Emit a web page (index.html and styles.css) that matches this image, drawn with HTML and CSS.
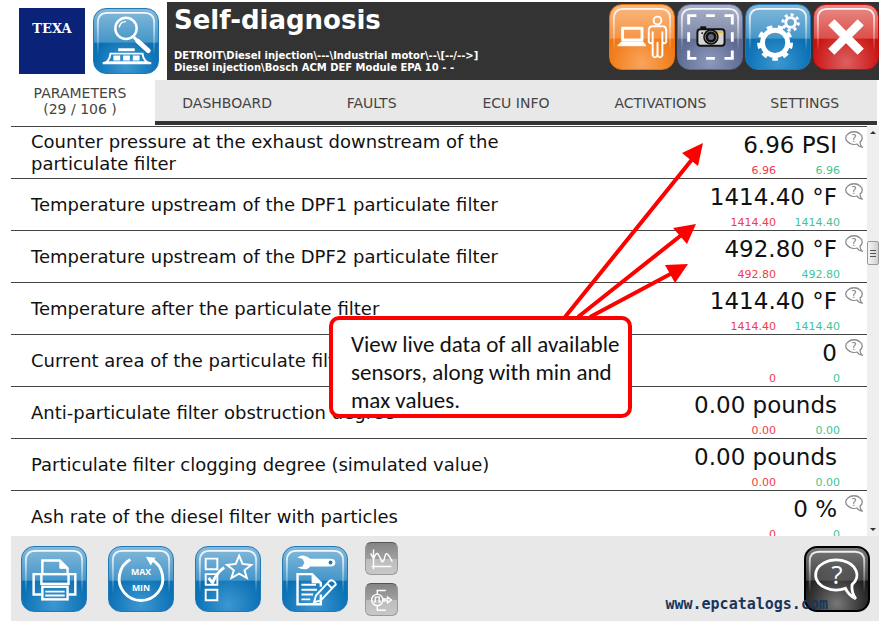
FILE: index.html
```
<!DOCTYPE html>
<html lang="en">
<head>
  <meta charset="UTF-8" />
  <title>Self-diagnosis</title>
  <link rel="stylesheet" href="styles.css">
</head>
<body>
  <!-- Shared symbols -->
  <svg class="defs" aria-hidden="true">
    <defs>
      <linearGradient id="shine" x1="0" y1="0" x2="0" y2="1">
        <stop offset="0" stop-color="#fff" stop-opacity="0.9" />
        <stop offset="1" stop-color="#fff" stop-opacity="0" />
      </linearGradient>
    </defs>
    <symbol id="gloss" viewBox="0 0 66 66">
      <path d="M4 48V14Q4 4 14 4H52Q62 4 62 14V48" fill="none" stroke="url(#shine)" stroke-width="2" />
    </symbol>
    <symbol id="bubble" viewBox="0 0 18 18">
      <path d="M12 13C9 14 5 13 3 11C0 9 0 5 3 3C6 0 12 0 15 3C18 5 18 9 15 11Q15 14 17 16Q14 16 12 13Z" fill="#fff" stroke="#8a8a8e" stroke-width="1.300" />
    </symbol>
  </svg>

  <header class="header">
    <div class="brand">
      <div class="logo">TEXA</div>
      <button class="tile blue" aria-label="Diagnosis">
        <svg viewBox="0 0 66 66">
          <use href="#gloss" />
          <g fill="none" stroke="#fff">
            <circle cx="33" cy="20" r="11" stroke-width="2.500" />
            <path d="M26 19Q27 13 33 13" stroke-width="1.500" />
            <path d="M41 29L44 32" stroke-width="3" />
            <path d="M45 33L56 43" stroke-width="5" stroke-linecap="round" />
            <path d="M25 42H42" stroke-width="3" />
            <path d="M9 56Q16 55 17 46H50Q51 55 59 56Z" stroke-width="2" />
          </g>
          <path d="M20 48H27V53H20ZM30 48H37V53H30ZM40 48H47V53H40ZM13 54H54V56H13Z" fill="#fff" />
        </svg>
      </button>
    </div>
    <div class="titlebar">
      <div class="heading">
        <h1>Self-diagnosis</h1>
        <p>DETROIT\Diesel injection\---\Industrial motor\--\[--/--&gt;]<br>Diesel injection\Bosch ACM DEF Module EPA 10 - -</p>
      </div>
      <div class="actions">
        <button class="tile orange" aria-label="Customer">
          <svg viewBox="0 0 66 66">
            <use href="#gloss" />
            <g fill="none" stroke="#fff" stroke-width="2" stroke-linejoin="round">
              <path d="M13 24H33V36H13Z" stroke-width="3" />
              <path d="M12 38H34L37 42H8Z" fill="#fff" stroke-width="1" />
              <circle cx="49" cy="16" r="4" />
              <path d="M44 22H54Q58 22 58 26V38Q56 41 54 38V28V52Q52 56 49 52V39V52Q46 56 44 52V28V38Q42 41 40 38V26Q40 22 44 22Z" />
            </g>
          </svg>
        </button>
        <button class="tile slate" aria-label="Screenshot">
          <svg viewBox="0 0 66 66">
            <use href="#gloss" />
            <path d="M11 20V11H19M29 11H38M48 11H56V20M56 28V38M56 47V55H48M38 55H29M19 55H11V47M11 38V28" fill="none" stroke="#fff" stroke-width="3" />
            <path d="M23 22H29V25H23Z" fill="#111" />
            <rect x="20" y="25" width="28" height="17" rx="3" fill="#d5d5d5" stroke="#111" stroke-width="2" />
            <path d="M40 27H46V29H40Z" fill="#efb920" />
            <circle cx="25" cy="29" r="1" fill="#111" />
            <circle cx="34" cy="33" r="8" fill="#111" />
            <circle cx="34" cy="33" r="6" fill="none" stroke="#777" />
            <circle cx="34" cy="33" r="3" fill="#667" />
          </svg>
        </button>
        <button class="tile blue" aria-label="Setup">
          <svg viewBox="0 0 66 66">
            <use href="#gloss" />
            <g fill="none" stroke="#fff">
              <circle cx="30" cy="39" r="13" stroke-width="5" />
              <circle cx="30" cy="39" r="16" stroke-width="5" pathLength="90" stroke-dasharray="5 5" />
              <circle cx="46" cy="18" r="5" stroke-width="3" />
              <circle cx="46" cy="18" r="8" stroke-width="3" pathLength="80" stroke-dasharray="5 5" />
            </g>
          </svg>
        </button>
        <button class="tile red" aria-label="Close">
          <svg viewBox="0 0 66 66">
            <use href="#gloss" />
            <path d="M21 21L45 45M45 21L21 45" stroke="#fff" stroke-width="9" stroke-linecap="square" />
          </svg>
        </button>
      </div>
    </div>
  </header>

  <nav class="tabs">
    <button class="tab active">PARAMETERS<br>(29 / 106 )</button>
    <button class="tab">DASHBOARD</button>
    <button class="tab">FAULTS</button>
    <button class="tab">ECU INFO</button>
    <button class="tab">ACTIVATIONS</button>
    <button class="tab">SETTINGS</button>
  </nav>

  <main class="content">
    <div class="list">
      <table class="params">
        <tbody>
          <tr>
            <td class="name">Counter pressure at the exhaust downstream of the particulate filter</td>
            <td class="reading"><div class="value">6.96 PSI</div><div class="limits"><span class="min">6.96</span><span class="max">6.96</span></div></td>
            <td class="info"><button aria-label="Help"><svg><use href="#bubble" /><text x="9" y="11">?</text></svg></button></td>
          </tr>
          <tr>
            <td class="name">Temperature upstream of the DPF1 particulate filter</td>
            <td class="reading"><div class="value">1414.40 °F</div><div class="limits"><span class="min">1414.40</span><span class="max">1414.40</span></div></td>
            <td class="info"><button aria-label="Help"><svg><use href="#bubble" /><text x="9" y="11">?</text></svg></button></td>
          </tr>
          <tr>
            <td class="name">Temperature upstream of the DPF2 particulate filter</td>
            <td class="reading"><div class="value">492.80 °F</div><div class="limits"><span class="min">492.80</span><span class="max">492.80</span></div></td>
            <td class="info"><button aria-label="Help"><svg><use href="#bubble" /><text x="9" y="11">?</text></svg></button></td>
          </tr>
          <tr>
            <td class="name">Temperature after the particulate filter</td>
            <td class="reading"><div class="value">1414.40 °F</div><div class="limits"><span class="min">1414.40</span><span class="max">1414.40</span></div></td>
            <td class="info"><button aria-label="Help"><svg><use href="#bubble" /><text x="9" y="11">?</text></svg></button></td>
          </tr>
          <tr>
            <td class="name">Current area of the particulate filter</td>
            <td class="reading"><div class="value">0</div><div class="limits"><span class="min">0</span><span class="max">0</span></div></td>
            <td class="info"><button aria-label="Help"><svg><use href="#bubble" /><text x="9" y="11">?</text></svg></button></td>
          </tr>
          <tr>
            <td class="name">Anti-particulate filter obstruction degree</td>
            <td class="reading"><div class="value">0.00 pounds</div><div class="limits"><span class="min">0.00</span><span class="max">0.00</span></div></td>
            <td class="info"></td>
          </tr>
          <tr>
            <td class="name">Particulate filter clogging degree (simulated value)</td>
            <td class="reading"><div class="value">0.00 pounds</div><div class="limits"><span class="min">0.00</span><span class="max">0.00</span></div></td>
            <td class="info"></td>
          </tr>
          <tr>
            <td class="name">Ash rate of the diesel filter with particles</td>
            <td class="reading"><div class="value">0 %</div><div class="limits"><span class="min">0</span><span class="max">0</span></div></td>
            <td class="info"><button aria-label="Help"><svg><use href="#bubble" /><text x="9" y="11">?</text></svg></button></td>
          </tr>
        </tbody>
      </table>
    </div>
    <div class="scrollbar">
      <button class="up" aria-label="Scroll up"></button>
      <div class="thumb"></div>
      <button class="down" aria-label="Scroll down"></button>
    </div>

    <!-- Callout over the list -->
    <svg class="arrows" viewBox="0 0 150 180" aria-hidden="true">
      <path d="M5 174L134 14M18 174L124 90M30 174L116 128" stroke="#f00" stroke-width="4" />
      <path d="M143 0L122 10L138 23ZM136 81L113 85L127 101ZM128 121L105 122L115 140Z" fill="#f00" />
    </svg>
    <div class="callout">View live data of all available sensors, along with min and max values.</div>
  </main>

  <footer class="toolbar">
    <button class="tile blue" aria-label="Print">
      <svg viewBox="0 0 66 66">
        <use href="#gloss" />
        <g fill="none" stroke="#fff" stroke-width="2.500">
          <path d="M21 27V14H39L47 22V27" />
          <path d="M39 14V22H47Z" fill="#fff" stroke-width="1" />
          <path d="M20 28H12V49H20M48 28H55V49H48" />
          <rect x="20" y="28" width="28" height="10" />
          <rect x="21" y="41" width="26" height="13" />
          <path d="M24 46H44M24 50H44" stroke-width="2" />
        </g>
      </svg>
    </button>
    <button class="tile blue" aria-label="Reset max and min">
      <svg viewBox="0 0 66 66">
        <use href="#gloss" />
        <path d="M22 13A22.500 22.500 0 1 0 44 13" fill="none" stroke="#fff" stroke-width="3" />
        <path d="M38 10L48 11L43 19Z" fill="#fff" />
        <text class="tile-text" x="33" y="29">MAX</text>
        <text class="tile-text" x="33" y="45">MIN</text>
      </svg>
    </button>
    <button class="tile blue" aria-label="Favourites">
      <svg viewBox="0 0 66 66">
        <use href="#gloss" />
        <g fill="none" stroke="#fff" stroke-width="2">
          <path d="M10 12H22V23H10ZM10 28H22V39H10ZM10 44H22V55H10Z" />
          <path d="M13 32L17 37Q21 27 29 21" stroke-width="3" />
          <path d="M44.500 9L48 17.500L57 18.500L50 24L52.500 32L44.500 27.500L36.500 32L39 24L32 18.500L41 17.500Z" />
        </g>
      </svg>
    </button>
    <button class="tile blue" aria-label="Repair notes">
      <svg viewBox="0 0 66 66">
        <use href="#gloss" />
        <path d="M15 11Q18 8 22 9Q26 10 28 12H49Q54 12 54 16T49 20H28Q26 23 22 23T15 21L20 20L22 16L20 12Z" fill="#fff" />
        <circle cx="49" cy="16" r="2" fill="#2379b5" />
        <g fill="none" stroke="#fff" stroke-width="2.500">
          <path d="M39 49V59H15V28H30L39 37V41" />
          <path d="M30 28V37H39Z" fill="#fff" stroke-width="1" />
          <path d="M19 39H34M19 44H35M19 49H31M19 54H28" stroke-width="2" />
          <path d="M32 57L34 50L48 35Q50 33 53 36T53 40L39 55ZM46 38L50 42" stroke-width="2" />
        </g>
      </svg>
    </button>
    <div class="stack">
      <button class="tile small" aria-label="Graph" disabled>
        <svg viewBox="0 0 33 33">
          <path d="M8 7V28M6 25H27M5 11L8 17Q11 9 13 12T17 20Q19 20 20 15T23 12T28 20" fill="none" stroke="#fff" stroke-width="1.500" />
        </svg>
      </button>
      <button class="tile small" aria-label="Signal output" disabled>
        <svg viewBox="0 0 33 33">
          <g fill="none" stroke="#fff" stroke-width="1.500">
            <circle cx="12" cy="17" r="6" />
            <path d="M12 11V7H21M12 23V28H21M8 19H10V14H14V19H16M19 16H23V14L27 17L23 20V18H19Z" />
          </g>
        </svg>
      </button>
    </div>
    <button class="tile black" aria-label="Help">
      <svg viewBox="0 0 66 66">
        <use href="#gloss" />
        <path d="M49 39A22 16 0 1 0 42 43Q45 50 53 54Q48 47 49 39Z" fill="none" stroke="#fff" stroke-width="3" />
        <text class="question" x="33" y="38">?</text>
      </svg>
    </button>
    <a class="watermark" href="#">www.epcatalogs.com</a>
  </footer>
</body>
</html>
```
FILE: styles.css
```
* {
  margin: 0;
  padding: 0;
  box-sizing: border-box;
}

body {
  height: 100vh;
  display: flex;
  flex-direction: column;
  background: #fff;
  font-family: Verdana, "DejaVu Sans", sans-serif;
  color: #111;
  overflow: hidden;
}

button {
  border: none;
  background: none;
  font-family: inherit;
  color: inherit;
  cursor: pointer;
}

.defs {
  position: absolute;
  width: 0;
  height: 0;
}

.header {
  display: flex;
  padding-top: 2px;
}

.brand {
  display: flex;
  gap: 8px;
  padding: 6px 8px 6px 19px;
}

.logo {
  width: 66px;
  height: 66px;
  padding-top: 13px;
  background: #0a2278;
  color: #fff;
  font-family: "DejaVu Serif", serif;
  font-size: 13px;
  font-weight: bold;
  text-align: center;
}

.titlebar {
  flex: 1;
  display: flex;
  justify-content: space-between;
  padding: 2px 0 0 7px;
  background: #333;
  color: #fff;
}

h1 {
  font-size: 26px;
  line-height: 32px;
  margin-bottom: 14px;
}

.heading p {
  font-size: 10px;
  font-weight: bold;
  line-height: 12px;
}

.actions {
  display: flex;
  gap: 2px;
}

/* Glossy square buttons */
.tile {
  flex: none;
  width: 66px;
  height: 66px;
  border: 1px solid transparent;
  border-radius: 13px;
}

.tile svg {
  display: block;
  width: 100%;
  height: 100%;
}

.blue {
  background: radial-gradient(circle at 50% 90%, #3d97d0, transparent 50%), linear-gradient(#85b9da, #4596c9 52%, #0b6fb2 53%, #0a72b8);
  border-color: #2279b5;
}

.orange {
  background: radial-gradient(circle at 50% 90%, #f9a45c, transparent 55%), linear-gradient(#f9b980, #f59343 52%, #ee7410 53%, #f07a10);
  border-color: #ee7208;
}

.slate {
  background: radial-gradient(circle at 50% 90%, #8d99bb, transparent 50%), linear-gradient(#a9b1c7, #7d88a8 52%, #5b678e 53%, #5f6c94);
  border-color: #596790;
}

.red {
  background: radial-gradient(circle at 50% 90%, #dc6060, transparent 55%), linear-gradient(#e88d88, #dc4e49 52%, #c7120f 53%, #cb0d0d);
  border-color: #c50f0d;
}

.black {
  background: radial-gradient(circle at 50% 90%, #777, transparent 60%), linear-gradient(#777, #444 52%, #151515 53%, #111);
  border: 2px solid #000;
}

.small {
  width: 33px;
  height: 33px;
  border: 1px solid #999;
  border-top-color: #555;
  border-radius: 6px;
  background: linear-gradient(#858585, #a0a0a0 50%, #bcbcbc 51%, #c8c8c8);
}

.tile-text {
  fill: #fff;
  font-family: "Open Sans", sans-serif;
  font-size: 9px;
  font-weight: bold;
  text-anchor: middle;
}

.question {
  fill: #fff;
  font-family: "Open Sans", sans-serif;
  font-size: 28px;
  text-anchor: middle;
}

.tabs {
  display: grid;
  grid-template-columns: 155px repeat(5, 1fr);
  height: 45px;
  padding-right: 2px;
}

.tab {
  padding-top: 4px;
  background: #e8e8e8;
  border-bottom: 4px solid #333;
  color: #444;
  font-size: 14px;
  line-height: 16px;
}

.tab.active {
  background: #fff;
  border-bottom-color: #fff;
  padding: 0 0 0 5px;
}

.content {
  position: relative;
  flex: 1;
  min-height: 0;
  display: flex;
  padding: 1px 0 0 11px;
}

.list {
  flex: 1;
  overflow: hidden;
}

.params {
  width: 100%;
  border-collapse: collapse;
}

.params tr {
  height: 52px;
  border-top: 1px solid #444;
}

.name {
  padding-left: 20px;
  padding-right: 180px;
  font-size: 18px;
  line-height: 22px;
}

.reading {
  width: 150px;
  text-align: right;
  vertical-align: top;
  white-space: nowrap;
}

.value {
  padding: 5px 3px 0 0;
  font-size: 23px;
  line-height: 26px;
}

.limits {
  display: flex;
  justify-content: flex-end;
  padding-top: 6px;
  font-size: 11px;
  line-height: 14px;
}

.limits span {
  width: 64px;
}

.min {
  color: #f23a4a;
}

.max {
  color: #3fc595;
}

.info {
  width: 27px;
  padding: 4px 0 0 5px;
  vertical-align: top;
}

.info button, .info svg {
  display: block;
  width: 18px;
  height: 18px;
}

.info text {
  fill: #777;
  font-size: 10px;
  text-anchor: middle;
}

.scrollbar {
  width: 12px;
  display: flex;
  flex-direction: column;
  align-items: center;
  justify-content: space-between;
  padding: 5px 0;
  background: #efefef;
}

.up, .down {
  border: 3px solid transparent;
}

.up {
  border-bottom-color: #333;
  border-top: none;
}

.down {
  border-top-color: #333;
  border-bottom: none;
}

.thumb {
  width: 12px;
  height: 24px;
  margin-bottom: 156px;
  border: 1px solid #999;
  border-radius: 2px;
  background: repeating-linear-gradient(#555 0 1px, transparent 1px 3px) center / 6px 7px no-repeat, linear-gradient(90deg, #f5f5f5, #d0d0d0);
}

.arrows {
  position: absolute;
  left: 560px;
  top: 18px;
  width: 150px;
  height: 180px;
}

.callout {
  position: absolute;
  left: 329px;
  top: 191px;
  width: 303px;
  padding: 10px 4px 0 18px;
  border: 4px solid #f00;
  border-radius: 10px;
  background: #fff;
  font-family: Calibri, Carlito, Lato, sans-serif;
  font-size: 23px;
  line-height: 28px;
}

.toolbar {
  position: relative;
  display: flex;
  gap: 21px;
  height: 85px;
  margin-left: 11px;
  padding: 10px 9px 0 10px;
  background: #e8e8e8;
}

.stack {
  display: flex;
  flex-direction: column;
  gap: 8px;
  margin: -4px auto 0 -4px;
}

.watermark {
  position: absolute;
  right: 51px;
  bottom: 8px;
  color: #17365d;
  font-family: "DejaVu Sans Mono", monospace;
  font-size: 15px;
  font-weight: bold;
  line-height: 18px;
  text-decoration: none;
}
```
